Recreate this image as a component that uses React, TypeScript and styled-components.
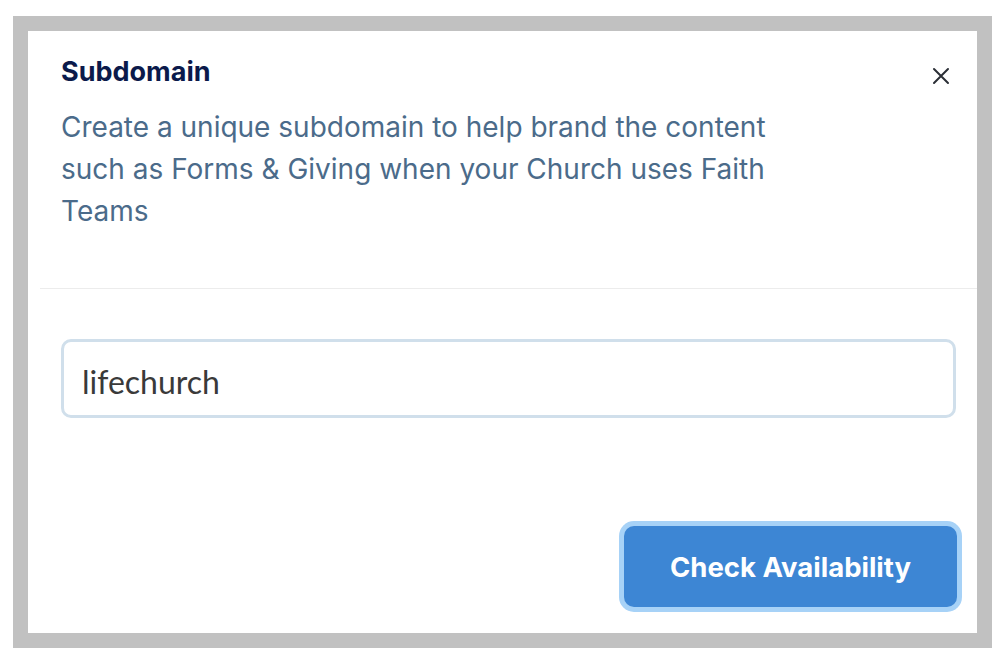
import styled, { createGlobalStyle } from "styled-components";

const GlobalStyle = createGlobalStyle`
  html, body {
    margin: 0;
    padding: 0;
    background: #ffffff;
  }
  * {
    box-sizing: border-box;
  }
`;

const Frame = styled.div`
  margin: 16px 0 0 13px;
  width: 979px;
  height: 632px;
  border: 15px solid #c1c1c1;
  background: #ffffff;
  display: flex;
  flex-direction: column;
`;

const Header = styled.div`
  display: flex;
  justify-content: space-between;
  align-items: flex-start;
  padding: 26px 24px 0 33px;
  height: 257px;
`;

const HeaderText = styled.div`
  display: flex;
  flex-direction: column;
`;

const Title = styled.h2`
  margin: 0;
  font-family: Inter, "Liberation Sans", sans-serif;
  font-weight: 700;
  font-size: 27px;
  line-height: 30px;
  color: #0b1a4b;
`;

const Description = styled.p`
  margin: 19px 0 0;
  max-width: 760px;
  font-family: Inter, "Liberation Sans", sans-serif;
  font-weight: 400;
  font-size: 28px;
  line-height: 42px;
  color: #4b6b8a;
`;

const CloseButton = styled.button`
  margin-top: 7px;
  width: 24px;
  height: 24px;
  padding: 0;
  border: none;
  background: transparent;
  display: flex;
  align-items: center;
  justify-content: center;
  cursor: pointer;
`;

const Divider = styled.hr`
  margin: 0 0 0 12px;
  border: none;
  border-top: 1px solid #ececec;
`;

const Body = styled.div`
  padding: 50px 21px 0 33px;
`;

const Input = styled.input`
  width: 100%;
  height: 79px;
  padding: 5px 18px 0;
  border: 3px solid #d0dfeb;
  border-radius: 10px;
  font-family: Lato, "Liberation Sans", sans-serif;
  font-size: 32px;
  color: #3a3a3a;
  outline: none;
`;

const Footer = styled.div`
  display: flex;
  justify-content: flex-end;
  padding: 108px 20px 0 0;
`;

const PrimaryButton = styled.button`
  width: 333px;
  height: 81px;
  border: none;
  border-radius: 10px;
  background: #3d86d4;
  box-shadow: 0 0 0 5px #a7d2f7;
  color: #ffffff;
  font-family: Inter, "Liberation Sans", sans-serif;
  font-weight: 700;
  font-size: 27.5px;
  cursor: pointer;
`;

export default function App() {
  return (
    <>
      <GlobalStyle />
      <Frame>
        <Header>
          <HeaderText>
            <Title>Subdomain</Title>
            <Description>
              Create a unique subdomain to help brand the content such as
              Forms &amp; Giving when your Church uses Faith Teams
            </Description>
          </HeaderText>
          <CloseButton aria-label="Close">
            <svg width="18" height="18" viewBox="0 0 18 18">
              <path
                d="M2 2 L16 16 M16 2 L2 16"
                stroke="#2b2f36"
                strokeWidth="2"
                strokeLinecap="round"
              />
            </svg>
          </CloseButton>
        </Header>
        <Divider />
        <Body>
          <Input defaultValue="lifechurch" />
        </Body>
        <Footer>
          <PrimaryButton>Check Availability</PrimaryButton>
        </Footer>
      </Frame>
    </>
  );
}
